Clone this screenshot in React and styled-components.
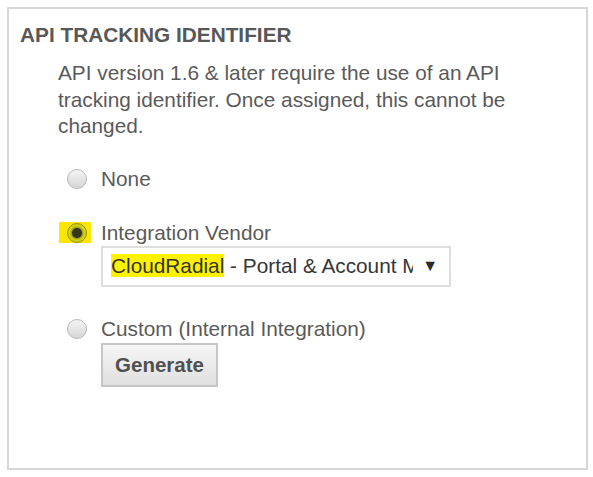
import styled, { createGlobalStyle } from "styled-components";

const GlobalStyle = createGlobalStyle`
  body {
    margin: 0;
    background: #fff;
    font-family: "Liberation Sans", Arial, sans-serif;
    color: #555;
  }
`;

const Panel = styled.section`
  box-sizing: border-box;
  margin: 7px 0 0 7px;
  width: 581px;
  height: 463px;
  border: 2px solid #d6d6d6;
  padding: 14px 12px 0 11px;
`;

const Title = styled.h3`
  margin: 0;
  font-size: 20.8px;
  line-height: 24px;
  font-weight: bold;
  color: #585858;
`;

const Body = styled.div`
  padding: 13px 0 0 38px;
`;

const Intro = styled.p`
  margin: 0;
  font-size: 20.8px;
  line-height: 26.5px;
  color: #5a5a5a;
  width: 480px;
`;

const Options = styled.div`
  display: flex;
  flex-direction: column;
  margin-top: 27px;
  gap: 30px;
`;

const Option = styled.div`
  display: grid;
  grid-template-columns: 43px auto;
  row-gap: 1px;
  align-items: center;
`;

const RadioWrap = styled.span`
  box-sizing: border-box;
  display: flex;
  align-items: center;
  width: 32px;
  height: 21px;
  margin-left: 1px;
  padding-left: 8px;
  background: ${(p) => (p.$highlight ? "#fde500" : "transparent")};
`;

const Radio = styled.span`
  box-sizing: border-box;
  width: 20px;
  height: 20px;
  border-radius: 50%;
  border: 1px solid ${(p) => (p.$checked ? "#8f8f1c" : "#b9b9b9")};
  background: ${(p) =>
    p.$checked
      ? "radial-gradient(circle, #34341f 0 4.5px, #9c9c24 5.5px, #cfcf10 7px, #d6d600 100%)"
      : "linear-gradient(#f4f4f4, #d6d6d6)"};
`;

const Label = styled.span`
  font-size: 20.8px;
  line-height: 24px;
  color: #5a5a5a;
`;

const Select = styled.div`
  grid-column: 2;
  box-sizing: border-box;
  width: 350px;
  height: 41px;
  border: 2px solid #dedede;
  display: flex;
  align-items: center;
  padding: 0 11px 0 8px;
  font-size: 20.8px;
  color: #363636;
  background: #fff;
`;

const SelectText = styled.span`
  flex: 1;
  min-width: 0;
  white-space: nowrap;
  overflow: hidden;
  margin-right: 9px;
`;

const Mark = styled.span`
  background: #fff200;
  color: #333;
`;

const Arrow = styled.span`
  flex: none;
  font-size: 16px;
  color: #2a2a2a;
`;

const Button = styled.button`
  grid-column: 2;
  justify-self: start;
  box-sizing: border-box;
  width: 117px;
  height: 44px;
  border: 2px solid #c6c6c6;
  background: linear-gradient(#f6f6f6, #e0e0e0);
  font-family: inherit;
  font-size: 20.5px;
  font-weight: bold;
  color: #505050;
  padding: 0;
  margin-top: 1px;
`;

export default function App() {
  return (
    <>
      <GlobalStyle />
      <Panel>
        <Title>API TRACKING IDENTIFIER</Title>
        <Body>
          <Intro>
            API version 1.6 &amp; later require the use of an API tracking
            identifier. Once assigned, this cannot be changed.
          </Intro>
          <Options>
            <Option>
              <RadioWrap>
                <Radio />
              </RadioWrap>
              <Label>None</Label>
            </Option>
            <Option>
              <RadioWrap $highlight>
                <Radio $checked />
              </RadioWrap>
              <Label>Integration Vendor</Label>
              <Select>
                <SelectText>
                  <Mark>CloudRadial</Mark> - Portal &amp; Account Management
                </SelectText>
                <Arrow>▼</Arrow>
              </Select>
            </Option>
            <Option>
              <RadioWrap>
                <Radio />
              </RadioWrap>
              <Label>Custom (Internal Integration)</Label>
              <Button>Generate</Button>
            </Option>
          </Options>
        </Body>
      </Panel>
    </>
  );
}
